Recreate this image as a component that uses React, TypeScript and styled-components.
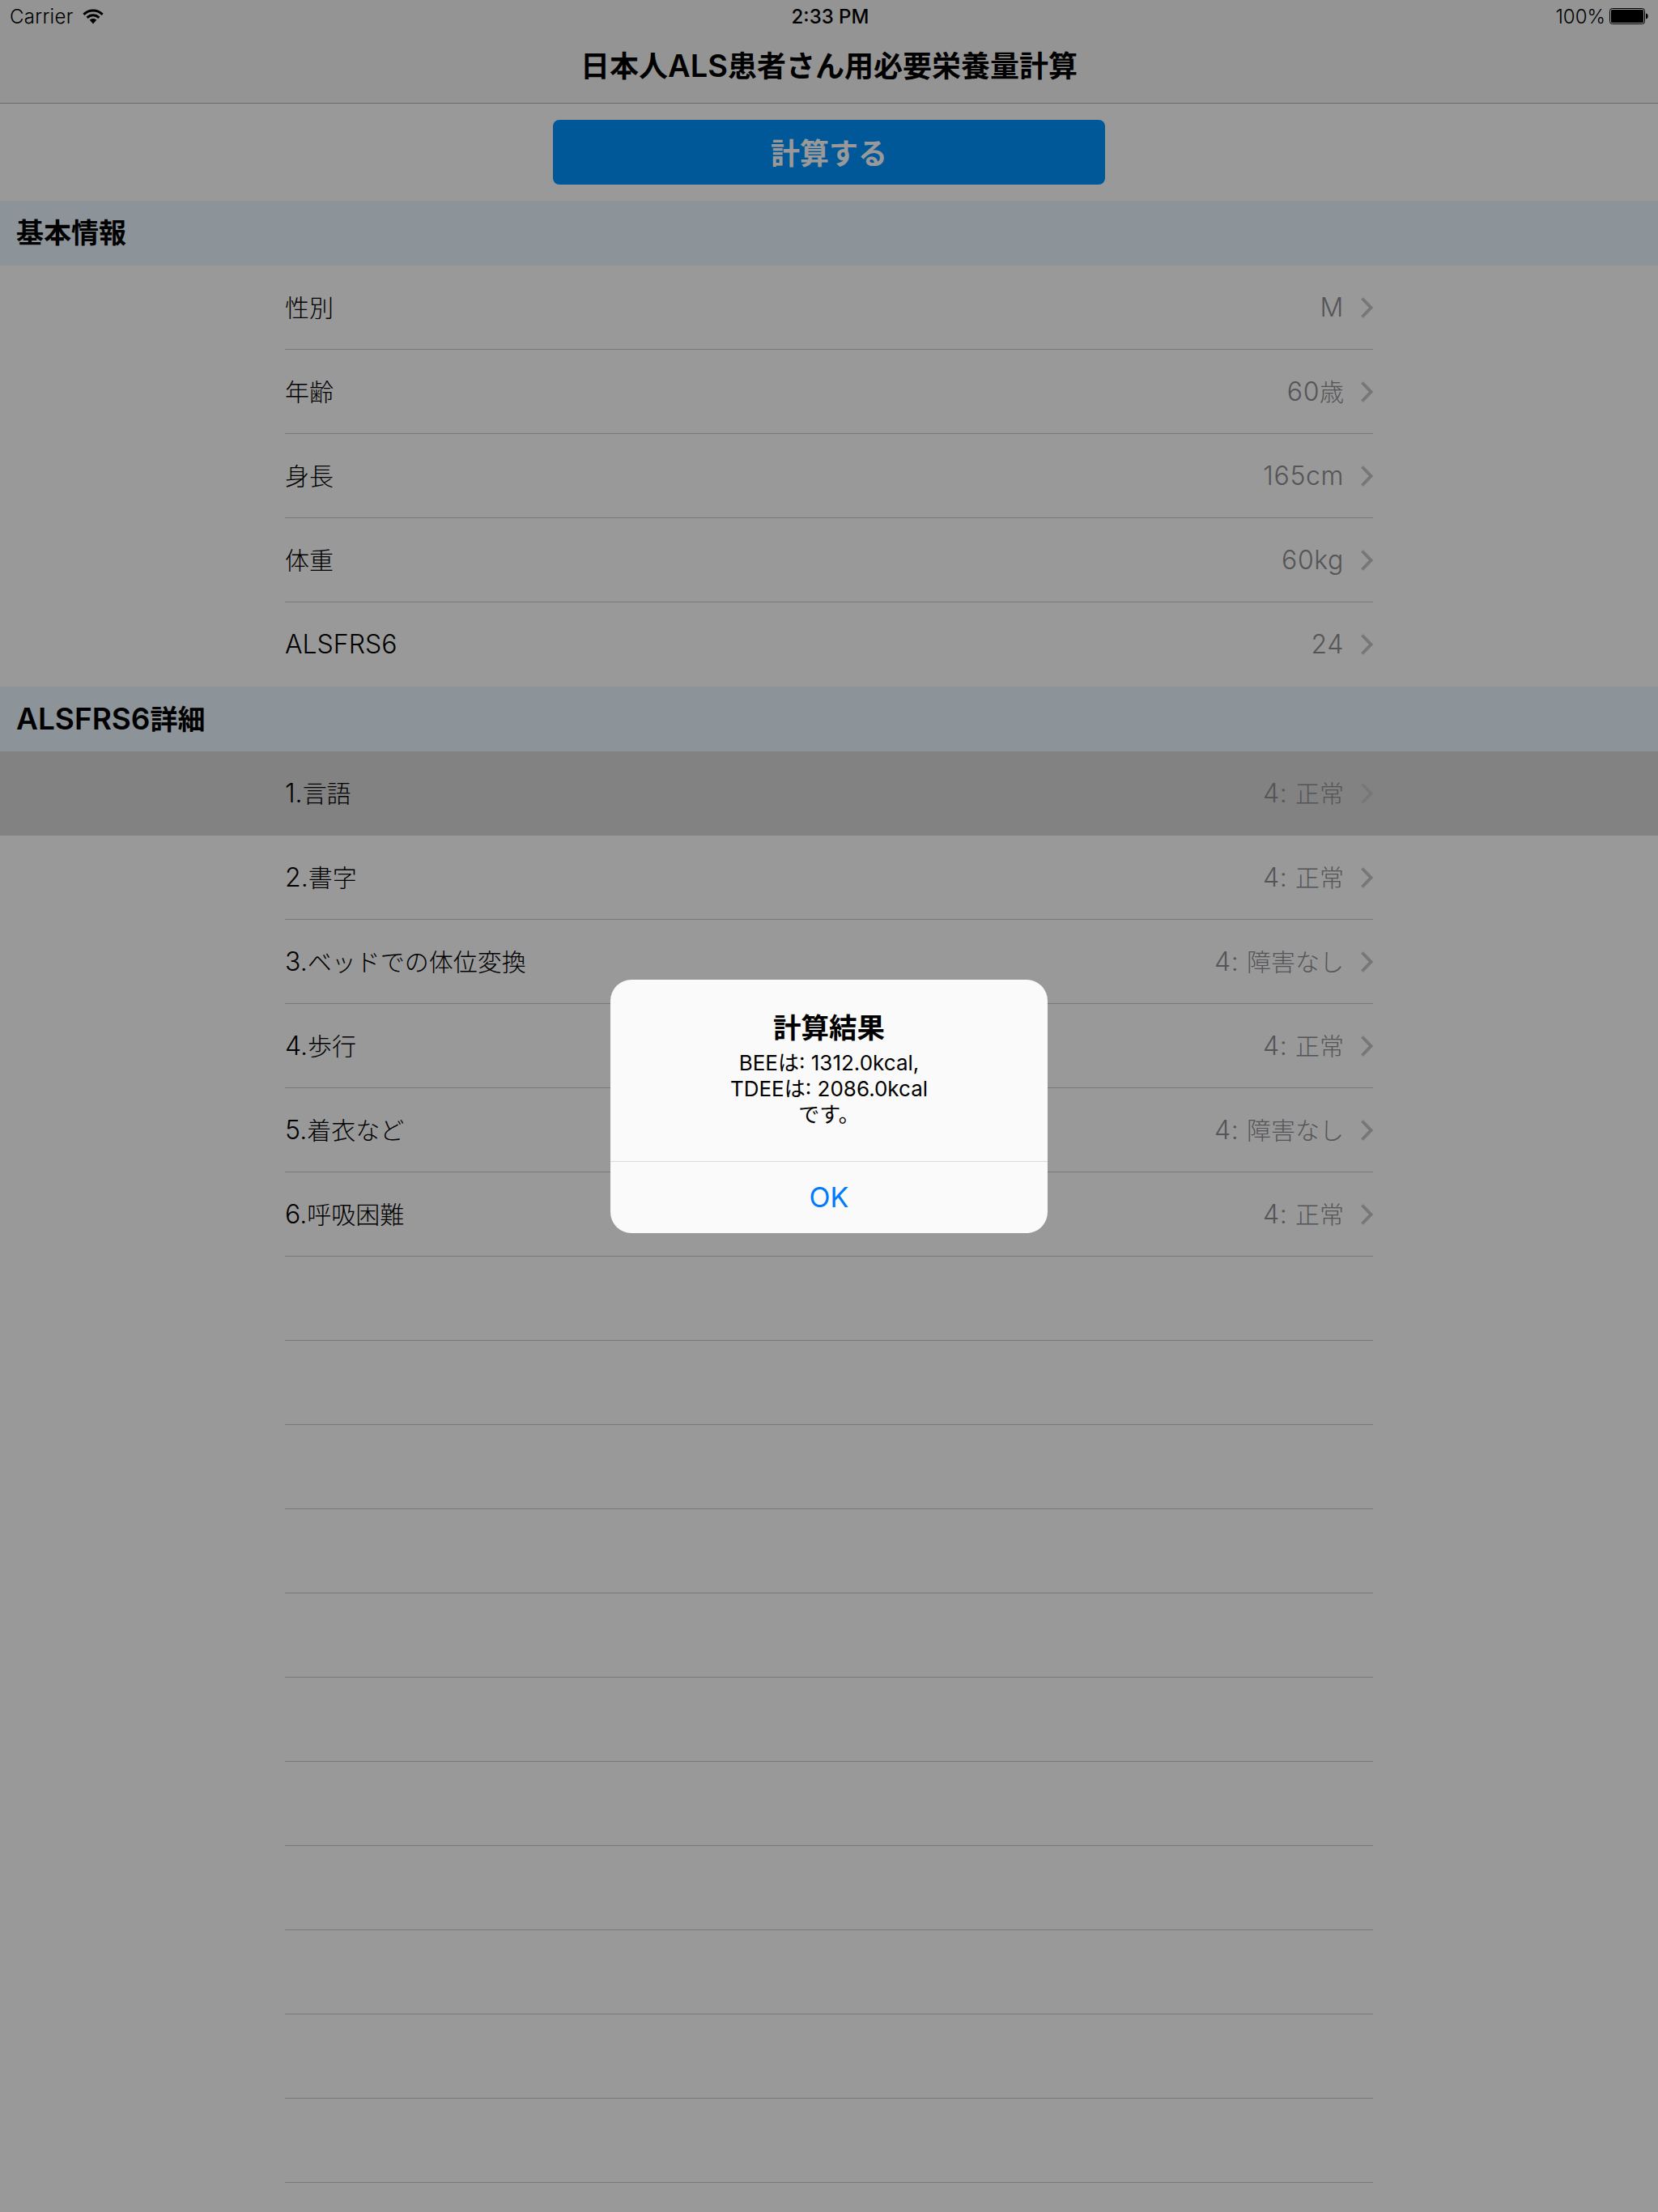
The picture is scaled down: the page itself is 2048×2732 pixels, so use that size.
import styled, { createGlobalStyle } from "styled-components";

const GlobalStyle = createGlobalStyle`
  html, body {
    margin: 0;
    padding: 0;
    background: #fff;
  }

  body {
    font-family: "Inter", "Noto Sans CJK JP", sans-serif;
    color: #000;
  }

  * {
    box-sizing: border-box;
  }
`;

const basicRows = [
  { label: "性別", value: "M" },
  { label: "年齢", value: "60歳" },
  { label: "身長", value: "165cm" },
  { label: "体重", value: "60kg" },
  { label: "ALSFRS6", value: "24" },
];

const detailRows = [
  { label: "1.言語", value: "4: 正常" },
  { label: "2.書字", value: "4: 正常" },
  { label: "3.ベッドでの体位変換", value: "4: 障害なし" },
  { label: "4.歩行", value: "4: 正常" },
  { label: "5.着衣など", value: "4: 障害なし" },
  { label: "6.呼吸困難", value: "4: 正常" },
];

const emptyRows = Array.from({ length: 11 }, (_, i) => i);

// latin glyphs sit larger than the japanese ones in the system font
const Mixed = ({ text }: { text: string }) => (
  <>
    {text.split(/([A-Za-z0-9.: ]+)/).map((part, i) =>
      i % 2 === 1 ? <Latin key={i}>{part}</Latin> : part
    )}
  </>
);

const Chevron = () => (
  <svg width="16" height="26" viewBox="0 0 16 26" fill="none">
    <path d="M2.5 1.5 L13.5 13 L2.5 24.5" stroke="#c7c7cc" strokeWidth="3.8" />
  </svg>
);

const WifiIcon = () => (
  <svg width="26" height="19" viewBox="0 0 26 19" fill="none">
    <path d="M1.4 6.8 C8 0.4 18 0.4 24.6 6.8" stroke="#000" strokeWidth="3" />
    <path d="M5.6 10.8 C10 6.8 16 6.8 20.4 10.8" stroke="#000" strokeWidth="3" />
    <path d="M8.6 13.6 C11.2 11.5 14.8 11.5 17.4 13.6 L13 18.6 Z" fill="#000" />
  </svg>
);

const BatteryIcon = () => (
  <svg width="48" height="20" viewBox="0 0 48 20" fill="none">
    <rect x="0.5" y="0.5" width="43" height="19" rx="3" stroke="#000" />
    <rect x="2" y="2" width="40" height="16" rx="1.5" fill="#000" />
    <path d="M45 6.5 C47 7 47.6 8 47.6 10 C47.6 12 47 13 45 13.5 Z" fill="#000" />
  </svg>
);

const App = () => {
  return (
    <Page>
      <GlobalStyle />
      <NavBar>
        <StatusBar>
          <StatusLeft>
            <span>Carrier</span>
            <WifiIcon />
          </StatusLeft>
          <StatusTime>2:33 PM</StatusTime>
          <StatusRight>
            100%
            <BatteryIcon />
          </StatusRight>
        </StatusBar>
        <NavTitle>
          <Mixed text="日本人ALS患者さん用必要栄養量計算" />
        </NavTitle>
      </NavBar>

      <ButtonArea>
        <CalcButton>計算する</CalcButton>
      </ButtonArea>

      <SectionHeader>基本情報</SectionHeader>
      {basicRows.map((row, i) => (
        <Row key={row.label}>
          <RowInner $noLine={i === basicRows.length - 1}>
            <RowLabel>
              <Mixed text={row.label} />
            </RowLabel>
            <RowValue>
              <Mixed text={row.value} />
            </RowValue>
            <Chevron />
          </RowInner>
        </Row>
      ))}

      <SectionHeader>
        <Mixed text="ALSFRS6詳細" />
      </SectionHeader>
      {detailRows.map((row, i) => (
        <Row key={row.label} $selected={i === 0}>
          <RowInner $noLine={i === 0}>
            <RowLabel>
              <Mixed text={row.label} />
            </RowLabel>
            <RowValue>
              <Mixed text={row.value} />
            </RowValue>
            <Chevron />
          </RowInner>
        </Row>
      ))}
      {emptyRows.map((i) => (
        <Row key={i}>
          <RowInner />
        </Row>
      ))}

      <Overlay>
        <Alert>
          <AlertBody>
            <AlertTitle>計算結果</AlertTitle>
            <AlertMessage>
              BEEは: 1312.0kcal,
              <br />
              TDEEは: 2086.0kcal
              <br />
              です。
            </AlertMessage>
          </AlertBody>
          <AlertButton>OK</AlertButton>
        </Alert>
      </Overlay>
    </Page>
  );
};

const Latin = styled.span``;

const Page = styled.div`
  position: relative;
  width: 2048px;
  height: 2732px;
  overflow: hidden;
  background: #fff;
`;

const NavBar = styled.div`
  height: 128px;
  background: #f7f7f7;
  border-bottom: 1px solid #b2b2b2;
`;

const StatusBar = styled.div`
  display: grid;
  grid-template-columns: 1fr auto 1fr;
  align-items: center;

  height: 40px;
  padding: 0 12px;

  font-size: 24px;
  font-weight: 300;
`;

const StatusLeft = styled.div`
  display: flex;
  align-items: center;
  gap: 11px;

  span {
    letter-spacing: 0.3px;
  }
`;

const StatusTime = styled.div`
  margin-left: 3px;
  font-weight: 500;
`;

const StatusRight = styled.div`
  display: flex;
  justify-content: flex-end;
  align-items: center;
  gap: 5px;
`;

const NavTitle = styled.div`
  height: 87px;

  display: flex;
  justify-content: center;
  align-items: baseline;
  line-height: 83px;

  font-size: 36px;
  font-weight: 700;

  ${Latin} {
    font-size: 38px;
    font-weight: 600;
  }
`;

const ButtonArea = styled.div`
  display: flex;
  justify-content: center;
  align-items: center;

  height: 120px;
`;

const CalcButton = styled.div`
  display: flex;
  justify-content: center;
  align-items: center;

  width: 682px;
  height: 80px;
  padding-bottom: 2px;
  border-radius: 8px;

  background: #0093ff;
  color: #fff;
  font-size: 36px;
  font-weight: 700;
`;

const SectionHeader = styled.div`
  height: 80px;
  padding-left: 20px;

  background: #e9f5ff;
  font-size: 34px;
  font-weight: 700;
  line-height: 80px;

  ${Latin} {
    font-size: 37px;
    font-weight: 600;
  }
`;

const Row = styled.div<{ $selected?: boolean }>`
  height: 104px;
  padding: 0 352px;
  background: ${(p) => (p.$selected ? "#d9d9d9" : "#fff")};
`;

const RowInner = styled.div<{ $noLine?: boolean }>`
  display: flex;
  align-items: center;

  height: 104px;
  border-bottom: 1px solid ${(p) => (p.$noLine ? "transparent" : "#c8c7cc")};
`;

const RowLabel = styled.div`
  flex: 1;
  font-size: 30px;
  font-weight: 300;
  line-height: 40px;

  ${Latin} {
    font-size: 32px;
  }
`;

const RowValue = styled.div`
  margin-right: 20px;
  color: #8e8e93;
  font-size: 30px;
  font-weight: 300;
  line-height: 40px;

  ${Latin} {
    font-size: 32px;
    letter-spacing: 0.6px;
  }
`;

const Overlay = styled.div`
  position: absolute;
  inset: 0;

  display: flex;
  justify-content: center;
  align-items: center;

  background: rgba(0, 0, 0, 0.4);
`;

const Alert = styled.div`
  width: 540px;
  height: 313px;
  border-radius: 26px;
  overflow: hidden;

  display: flex;
  flex-direction: column;

  background: #fafafa;
`;

const AlertBody = styled.div`
  flex: 1;
  padding-top: 36px;
  text-align: center;
  border-bottom: 1px solid #dcdcdf;
`;

const AlertTitle = styled.div`
  font-size: 34.5px;
  font-weight: 700;
  line-height: 48px;
`;

const AlertMessage = styled.div`
  margin-top: 3px;
  font-size: 26px;
  line-height: 32px;
`;

const AlertButton = styled.div`
  display: flex;
  justify-content: center;
  align-items: center;

  height: 88px;
  color: #007aff;
  font-size: 34px;
`;

export default App;
